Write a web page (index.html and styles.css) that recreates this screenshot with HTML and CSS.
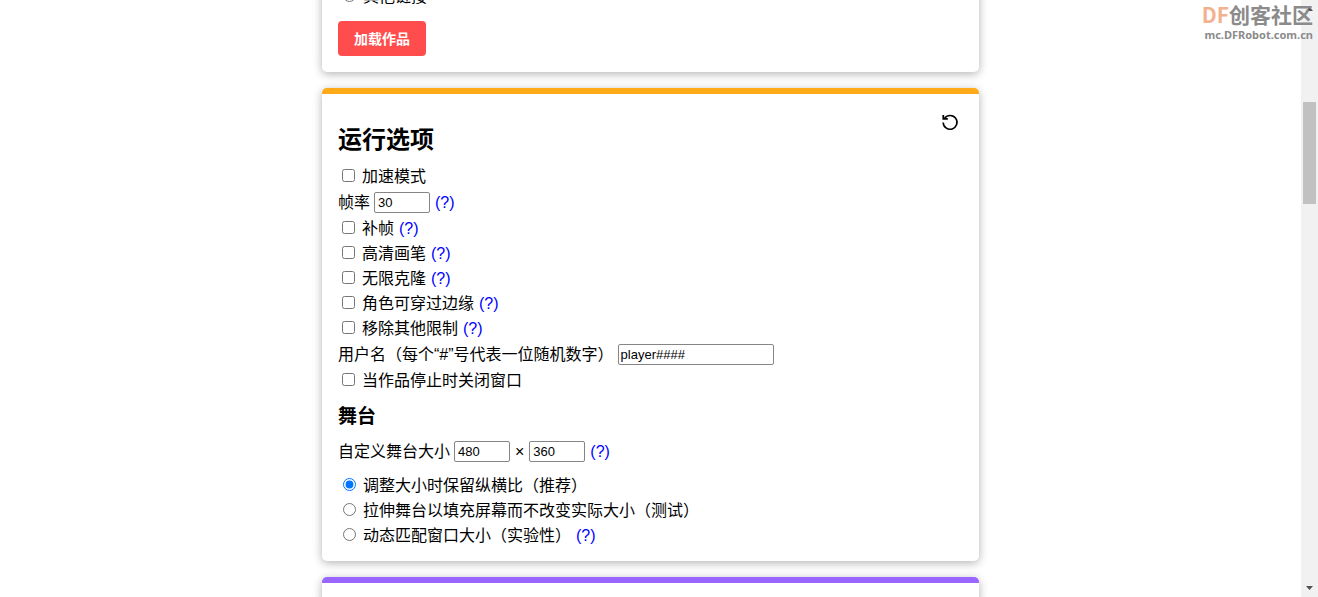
FILE: index.html
```html
<!DOCTYPE html>
<html lang="zh-CN">
<head>
<meta charset="utf-8">
<meta name="viewport" content="width=device-width, initial-scale=1">
<title>运行选项</title>
<link rel="stylesheet" href="styles.css">
</head>
<body>
<div class="page">
  <main class="content">
    <section class="card card-load">
      <div class="option"><input type="radio" id="other-link" name="source"><label for="other-link">其他链接</label></div>
      <button class="load-button" type="button">加载作品</button>
    </section>

    <section class="card card-run">
      <button class="reset" type="button" aria-label="重置">
        <svg width="20" height="20" viewBox="0 0 20 20" fill="none" stroke="#000" stroke-width="1.6"><path d="M4.600 6.200A6.900 6.900 0 1 1 3.200 10.400"/><path d="M3.300 3v3.800h4.500" stroke-width="1.800"/></svg>
      </button>
      <h2 class="title">运行选项</h2>
      <div class="option"><input type="checkbox" id="turbo"><label for="turbo">加速模式</label></div>
      <div class="field"><label for="fps">帧率</label><input class="text-box small" type="text" id="fps" value="30"><a href="#fps">(?)</a></div>
      <div class="option"><input type="checkbox" id="interpolation"><label for="interpolation">补帧</label><a href="#interpolation">(?)</a></div>
      <div class="option"><input type="checkbox" id="pen"><label for="pen">高清画笔</label><a href="#pen">(?)</a></div>
      <div class="option"><input type="checkbox" id="clones"><label for="clones">无限克隆</label><a href="#clones">(?)</a></div>
      <div class="option"><input type="checkbox" id="fencing"><label for="fencing">角色可穿过边缘</label><a href="#fencing">(?)</a></div>
      <div class="option"><input type="checkbox" id="limits"><label for="limits">移除其他限制</label><a href="#limits">(?)</a></div>
      <div class="field"><label for="username">用户名（每个“#”号代表一位随机数字）</label><input class="text-box" type="text" id="username" value="player####"></div>
      <div class="option"><input type="checkbox" id="autoclose"><label for="autoclose">当作品停止时关闭窗口</label></div>

      <h3 class="subtitle">舞台</h3>
      <div class="field"><label for="stage-width">自定义舞台大小</label><input class="text-box small" type="text" id="stage-width" value="480"><span class="times">×</span><input class="text-box small" type="text" id="stage-height" aria-label="舞台高度" value="360"><a href="#stage-width">(?)</a></div>
      <div class="choices">
        <div class="option"><input type="radio" id="keep-ratio" name="resize" checked><label for="keep-ratio">调整大小时保留纵横比（推荐）</label></div>
        <div class="option"><input type="radio" id="stretch" name="resize"><label for="stretch">拉伸舞台以填充屏幕而不改变实际大小（测试）</label></div>
        <div class="option"><input type="radio" id="dynamic" name="resize"><label for="dynamic">动态匹配窗口大小（实验性）</label><a href="#dynamic">(?)</a></div>
      </div>
    </section>

    <section class="card card-next"></section>
  </main>

  <div class="scrollbar" aria-hidden="true">
    <svg class="arrow" width="7" height="4" viewBox="0 0 7 4"><path d="M0 4 3.500 0 7 4z" fill="#505050"/></svg>
    <div class="track"><div class="thumb"></div></div>
    <svg class="arrow" width="7" height="4" viewBox="0 0 7 4"><path d="M0 0h7L3.500 4z" fill="#505050"/></svg>
  </div>
</div>

<div class="watermark">
  <div class="brand"><span class="brand-accent">DF</span>创客社区</div>
  <div class="site">mc.DFRobot.com.cn</div>
</div>
</body>
</html>
```
FILE: styles.css
```css
* { box-sizing: border-box; }

body {
  margin: 0;
  overflow: hidden;
  background: #fff;
  color: #000;
  font: 16px/25px "Liberation Sans", "Noto Sans CJK SC", sans-serif;
}

.page { display: flex; height: 100vh; }

.content {
  flex: 1;
  display: flex;
  flex-direction: column;
  align-items: center;
  gap: 16px;
  overflow: hidden;
}

.card {
  position: relative;
  flex-shrink: 0;
  width: calc(100% - 32px);
  max-width: 657px;
  padding: 16px;
  border-top: 6px solid;
  border-radius: 5px;
  background: #fff;
  box-shadow: 0 2px 10px rgba(0, 0, 0, 0.3);
}

/* The page is scrolled part of the way through this card. */
.card-load {
  margin-top: -16px;
  padding-top: 0;
  border-top: 0;
}

.card-run { padding-top: 28px; padding-bottom: 13px; border-color: #ffab19; }
.card-next { min-height: 120px; border-color: #9966ff; }

.title { margin: 0 0 6px; font-size: 24px; line-height: 36px; }
.subtitle { margin: 8px 0 6px; font-size: 19px; line-height: 31px; }

.option, .field { display: flex; align-items: center; gap: 4px; }
.option { height: 25px; }
.field { height: 27px; }

.option input { width: 13px; height: 13px; margin: 0 3px 2px 4px; }
.option input[type="radio"] { margin-left: 5px; }

.choices { margin-top: 8px; }

a { margin-left: 1px; color: #00f; text-decoration: none; }
.times { margin: 0 1px; }

.text-box {
  width: 156px;
  height: 21px;
  padding: 1px 2px;
  border: 1px solid #858585;
  border-radius: 2px;
  background: #fff;
  color: #000;
  font: 13px "Liberation Sans", sans-serif;
}
.text-box.small { width: 56px; padding: 1px 3px; }

.load-button {
  display: block;
  margin-top: 12px;
  padding: 9px 16px 7px;
  border: 0;
  border-radius: 4px;
  background: #ff4c4c;
  color: #fff;
  font: bold 14px/19px "Liberation Sans", "Noto Sans CJK SC", sans-serif;
}

.reset {
  position: absolute;
  top: 18px;
  right: 19px;
  display: flex;
  padding: 0;
  border: 0;
  background: none;
}

.scrollbar {
  display: flex;
  flex-direction: column;
  align-items: center;
  width: 17px;
  padding: 7px 2px;
  background: #f1f1f1;
}
.arrow { flex-shrink: 0; }
.track { flex: 1; width: 100%; padding-top: 91px; }
.thumb { height: 102px; background: #c1c1c1; }

.watermark {
  position: absolute;
  top: 1px;
  right: 5px;
  color: #8b8b8b;
  font-family: "Noto Sans CJK SC", sans-serif;
  font-weight: bold;
  text-align: right;
  pointer-events: none;
}
.brand { font-size: 21px; line-height: 26px; }
.brand-accent { color: #f3b28f; }
.site { font: bold 11px/16px "Noto Sans", sans-serif; }
```
